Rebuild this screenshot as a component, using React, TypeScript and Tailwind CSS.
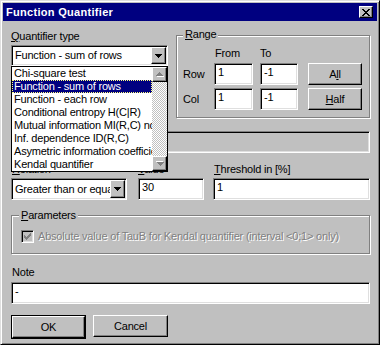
import React from "react";

const FONT =
  "[font-family:'Liberation_Sans',Arial,sans-serif] text-[11px] leading-[13px] tracking-[-0.2px]";
const SUNKEN =
  "border border-t-[#808080] border-l-[#808080] border-b-white border-r-white shadow-[inset_1px_1px_0_#000,inset_-1px_-1px_0_#dfdfdf]";
const RAISED =
  "border border-t-white border-l-white border-b-black border-r-black shadow-[inset_-1px_-1px_0_#808080]";
const ETCHED = "border border-[#808080] shadow-[inset_1px_1px_0_#fff,1px_1px_0_#fff]";

const ITEMS = [
  "Chi-square test",
  "Function - sum of rows",
  "Function - each row",
  "Conditional entropy H(C|R)",
  "Mutual information MI(R,C) normalized",
  "Inf. dependence ID(R,C)",
  "Asymetric information coefficient",
  "Kendal quantifier",
];

const U = ({ children }: { children: React.ReactNode }) => (
  <span className="underline underline-offset-1 decoration-1">{children}</span>
);

const DownArrow = () => (
  <svg width="7" height="4" viewBox="0 0 7 4">
    <path d="M0 0h7v1H0zM1 1h5v1H1zM2 2h3v1H2zM3 3h1v1H3z" fill="#000" />
  </svg>
);

// greyed arrow used on the disabled list scrollbar
const GreyArrow = ({ up }: { up?: boolean }) => (
  <svg width="8" height="5" viewBox="0 0 8 5" className={up ? "" : "rotate-180"}>
    <path d="M4 1h1v1H4zM3 2h3v1H3zM2 3h5v1H2zM1 4h7v1H1z" fill="#fff" />
    <path d="M3 0h1v1H3zM2 1h3v1H2zM1 2h5v1H1zM0 3h7v1H0z" fill="#808080" />
  </svg>
);

const CloseX = () => (
  <svg width="8" height="7" viewBox="0 0 8 7">
    <path
      d="M0 0h2v1H0zM6 0h2v1H6zM1 1h2v1H1zM5 1h2v1H5zM2 2h4v1H2zM3 3h2v1H3zM2 4h4v1H2zM1 5h2v1H1zM5 5h2v1H5zM0 6h2v1H0zM6 6h2v1H6z"
      fill="#000"
    />
  </svg>
);

const Check = () => (
  <svg width="7" height="7" viewBox="0 0 7 7">
    <path
      d="M6 0h1v1H6zM5 1h2v1H5zM0 2h1v1H0zM4 2h3v1H4zM0 3h2v1H0zM3 3h3v1H3zM0 4h5v1H0zM1 5h3v1H1zM2 6h1v1H2z"
      fill="#808080"
    />
  </svg>
);

function Edit({ value, className = "" }: { value: string; className?: string }) {
  return (
    <div className={`${SUNKEN} bg-white h-[22px] pl-[3px] pt-[2px] whitespace-nowrap overflow-hidden ${className}`}>
      {value}
    </div>
  );
}

function Combo({
  value,
  className = "",
  children,
}: {
  value: string;
  className?: string;
  children?: React.ReactNode;
}) {
  return (
    <div className={`relative ${className}`}>
      <div className={`${SUNKEN} bg-white flex h-full p-[1px]`}>
        <div className="flex-1 overflow-hidden whitespace-nowrap pl-[2px] self-center">{value}</div>
        <div className={`${RAISED} bg-[#c0c0c0] w-[15px] flex items-center justify-center`}>
          <DownArrow />
        </div>
      </div>
      {children}
    </div>
  );
}

function Button({ children, className = "" }: { children: React.ReactNode; className?: string }) {
  return (
    <div className={`${RAISED} bg-[#c0c0c0] h-[22px] flex items-center justify-center ${className}`}>
      {children}
    </div>
  );
}

function DropList() {
  return (
    <div className="absolute left-0 top-full z-10 w-[157px] h-[106px] border border-black bg-white flex">
      <div className="flex-1 overflow-hidden">
        {ITEMS.map((it, i) => (
          <div
            key={it}
            className={`h-[13px] pl-[2px] whitespace-nowrap ${
              i === 1
                ? "bg-[#000080] text-white outline outline-1 outline-dotted outline-[#ffff80] -outline-offset-1"
                : ""
            }`}
          >
            {it}
          </div>
        ))}
      </div>
      <div className="w-[15px] flex flex-col">
        <div className={`${RAISED} bg-[#c0c0c0] h-[15px] flex items-center justify-center`}>
          <GreyArrow up />
        </div>
        <div className="flex-1 [background-image:repeating-conic-gradient(#fff_0%_25%,#c0c0c0_0%_50%)] [background-size:2px_2px]" />
        <div className={`${RAISED} bg-[#c0c0c0] h-[15px] flex items-center justify-center`}>
          <GreyArrow />
        </div>
      </div>
    </div>
  );
}

export default function App() {
  return (
    <div
      className={`${FONT} text-black w-[380px] h-[345px] bg-[#c0c0c0] border border-t-[#dfdfdf] border-l-[#dfdfdf] border-b-black border-r-black shadow-[inset_1px_1px_0_#fff,inset_-1px_-1px_0_#808080] p-[2px] flex flex-col`}
    >
      {/* title bar */}
      <div className="h-[18px] bg-[#000080] flex items-center pl-[3px] pr-[4px]">
        <span className="flex-1 text-white font-bold tracking-[0.3px]">Function Quantifier</span>
        <div className={`${RAISED} bg-[#c0c0c0] w-[14px] h-[12px] flex items-center justify-center`}>
          <CloseX />
        </div>
      </div>

      <div className="pl-[8px] pr-[7px] flex flex-col">
        {/* quantifier type + range */}
        <div className="flex mt-[7px]">
          <div className="w-[157px] flex flex-col">
            <div className="mt-[2px]">
              <U>Q</U>uantifier type
            </div>
            <Combo value="Function - sum of rows" className="mt-[2px] h-[21px]">
              <DropList />
            </Combo>
          </div>

          <div className={`${ETCHED} ml-[8px] w-[194px] h-[83px] mt-[7px] flex flex-col`}>
            <div className="-mt-[8px] ml-[6px] px-[2px] w-fit bg-[#c0c0c0]">
              <U>R</U>ange
            </div>
            <div className="flex mt-[6px]">
              <span className="ml-[38px] w-[45px]">From</span>
              <span>To</span>
            </div>
            <div className="flex items-center mt-[3px]">
              <span className="ml-[6px] w-[31px]">Row</span>
              <Edit value="1" className="w-[39px]" />
              <Edit value="-1" className="w-[38px] ml-[7px]" />
              <Button className="w-[54px] ml-[10px]">
                A<U>l</U>l
              </Button>
            </div>
            <div className="flex items-center mt-[3px]">
              <span className="ml-[6px] w-[31px]">Col</span>
              <Edit value="1" className="w-[39px]" />
              <Edit value="-1" className="w-[38px] ml-[7px]" />
              <Button className="w-[54px] ml-[10px]">
                <U>H</U>alf
              </Button>
            </div>
          </div>
        </div>

        {/* name (covered by list) */}
        <div className={`${SUNKEN} mt-[13px] h-[22px] bg-[#c0c0c0]`} />

        {/* relation / value / threshold */}
        <div className="flex mt-[10px]">
          <div className="w-[116px] pl-[1px]">
            <U>R</U>elation
          </div>
          <div className="w-[66px] ml-[11px]">
            <U>V</U>alue
          </div>
          <div className="flex-1 ml-[10px]">
            <U>T</U>hreshold in [%]
          </div>
        </div>
        <div className="flex mt-[2px]">
          <Combo value="Greater than or equal" className="w-[116px] h-[22px]" />
          <Edit value="30" className="w-[66px] ml-[11px]" />
          <Edit value="1" className="flex-1 ml-[9px]" />
        </div>

        {/* parameters */}
        <div className={`${ETCHED} mt-[15px] h-[39px] flex flex-col`}>
          <div className="-mt-[7px] ml-[7px] px-[2px] w-fit bg-[#c0c0c0]">
            <U>P</U>arameters
          </div>
          <div className="flex items-center mt-[8px] ml-[9px]">
            <div className={`${SUNKEN} w-[13px] h-[13px] bg-[#c0c0c0] flex items-center justify-center`}>
              <Check />
            </div>
            <span className="ml-[4px] text-[#808080] [text-shadow:1px_1px_0_#fff]">
              Absolute value of TauB for Kendal quantifier (interval &lt;0;1&gt; only)
            </span>
          </div>
        </div>

        {/* note */}
        <div className="mt-[12px] pl-[1px]">Note</div>
        <Edit value="-" className="mt-[3px]" />

        {/* buttons */}
        <div className="flex mt-[11px]">
          <div className="border border-black w-[75px]">
            <Button className="h-[20px]">OK</Button>
          </div>
          <Button className="w-[75px] ml-[7px]">Cancel</Button>
        </div>
      </div>
    </div>
  );
}
